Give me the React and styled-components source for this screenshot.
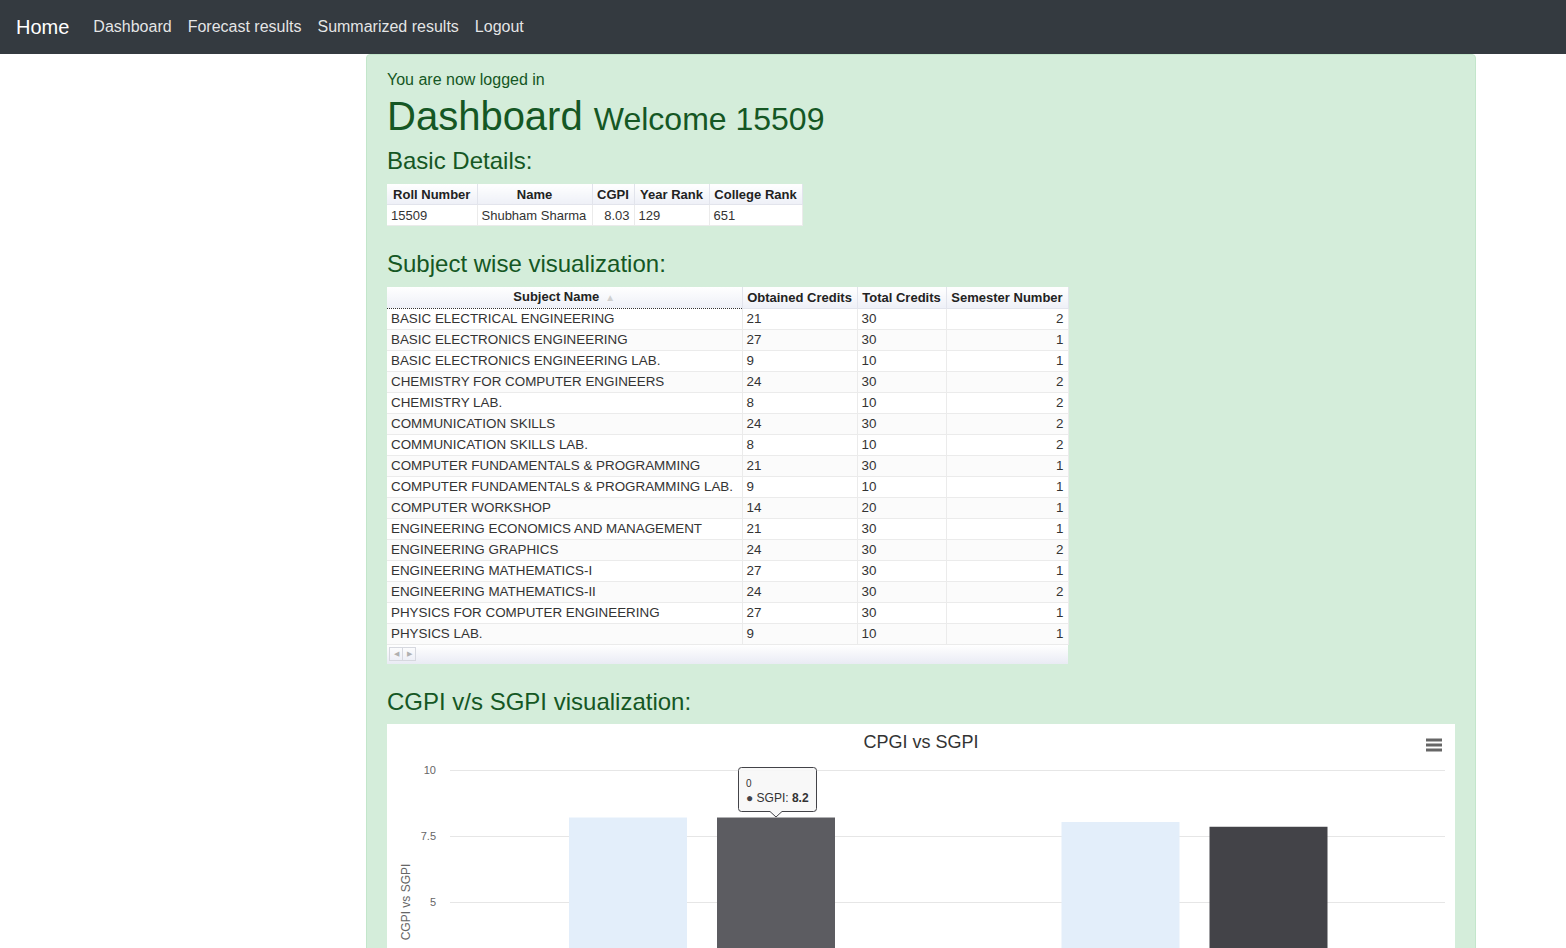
import React from 'react';
import styled, { createGlobalStyle } from 'styled-components';

const GlobalStyle = createGlobalStyle`
  html, body {
    margin: 0;
    padding: 0;
    overflow: hidden;
  }
  body {
    font-family: 'Liberation Sans', Arial, sans-serif;
    font-size: 16px;
    line-height: 1.5;
    color: #212529;
    background: #fff;
  }
  * {
    box-sizing: border-box;
  }
`;

const Navbar = styled.nav`
  height: 54px;
  background: #343a40;
  display: flex;
  align-items: center;
  padding: 0 16px;
`;

const Brand = styled.a`
  color: #fff;
  font-size: 20px;
  margin-right: 16px;
  text-decoration: none;
`;

const NavLinks = styled.div`
  display: flex;
`;

const NavLink = styled.a`
  color: rgba(255, 255, 255, 0.88);
  font-size: 16px;
  padding: 0 8px;
  text-decoration: none;
`;

const Main = styled.main`
  padding: 0 90px 0 366px;
`;

const Alert = styled.div`
  background: #d4edda;
  border: 1px solid #c3e6cb;
  border-radius: 4px;
  color: #155724;
  padding: 13px 20px 40px;
`;

const Note = styled.div`
  font-size: 16px;
  line-height: 24px;
`;

const PageTitle = styled.h1`
  font-size: 40px;
  font-weight: 400;
  line-height: 1.2;
  margin: 0 0 7px;
`;

const TitleSmall = styled.span`
  font-size: 32px;
`;

const SectionTitle = styled.h3`
  font-size: 24px;
  font-weight: 400;
  line-height: 1.2;
  margin: 0 0 8px;
`;

const TableBlock = styled.div`
  margin-bottom: 24px;
`;

const DataTable = styled.table`
  border-collapse: collapse;
  table-layout: fixed;
  width: ${(p) => p.$width}px;
  background: #fff;
  font-size: 13px;
  line-height: 15px;
  color: #333;
`;

const HeadCell = styled.th`
  height: 21px;
  padding: 0 4px;
  font-size: 13px;
  font-weight: 700;
  text-align: ${(p) => p.$align || 'center'};
  white-space: nowrap;
  color: #222;
  background: linear-gradient(#ffffff, #eef0f7);
  border-right: 1px solid #e2e4ec;
  border-bottom: 1px ${(p) => (p.$sorted ? 'dotted #333' : 'solid #e2e4ec')};
`;

const SortArrow = styled.span`
  color: #d0d0d0;
  font-size: 10px;
  margin-left: 6px;
`;

const Row = styled.tr`
  background: ${(p) => (p.$odd ? '#fbfbfb' : '#fff')};
`;

const Cell = styled.td`
  height: 21px;
  padding: 0 4px;
  font-size: ${(p) => p.$size || 13}px;
  text-align: ${(p) => p.$align || 'left'};
  white-space: nowrap;
  overflow: hidden;
  border-right: 1px solid #ebebeb;
  border-bottom: 1px solid #ebebeb;
`;

const TableFooter = styled.div`
  width: ${(p) => p.$width}px;
  height: 19px;
  padding: 2px 2px;
  display: flex;
  background: linear-gradient(#ffffff, #e9ebf4);
`;

const ScrollButton = styled.span`
  width: 14px;
  height: 14px;
  border: 1px solid #d6d8df;
  margin-right: -1px;
  display: flex;
  align-items: center;
  justify-content: center;
  color: #b0b0b0;
  font-size: 7px;
  line-height: 1;
`;

const ChartBox = styled.div`
  background: #fff;
  height: 400px;
`;

const basics = [['15509', 'Shubham Sharma', '8.03', '129', '651']];

const subjects = [
  ['BASIC ELECTRICAL ENGINEERING', 21, 30, 2],
  ['BASIC ELECTRONICS ENGINEERING', 27, 30, 1],
  ['BASIC ELECTRONICS ENGINEERING LAB.', 9, 10, 1],
  ['CHEMISTRY FOR COMPUTER ENGINEERS', 24, 30, 2],
  ['CHEMISTRY LAB.', 8, 10, 2],
  ['COMMUNICATION SKILLS', 24, 30, 2],
  ['COMMUNICATION SKILLS LAB.', 8, 10, 2],
  ['COMPUTER FUNDAMENTALS & PROGRAMMING', 21, 30, 1],
  ['COMPUTER FUNDAMENTALS & PROGRAMMING LAB.', 9, 10, 1],
  ['COMPUTER WORKSHOP', 14, 20, 1],
  ['ENGINEERING ECONOMICS AND MANAGEMENT', 21, 30, 1],
  ['ENGINEERING GRAPHICS', 24, 30, 2],
  ['ENGINEERING MATHEMATICS-I', 27, 30, 1],
  ['ENGINEERING MATHEMATICS-II', 24, 30, 2],
  ['PHYSICS FOR COMPUTER ENGINEERING', 27, 30, 1],
  ['PHYSICS LAB.', 9, 10, 1],
];

// valeurs du graphique : [cgpi, sgpi] par semestre
const chartData = [
  { cgpi: 8.2, sgpi: 8.2 },
  { cgpi: 8.03, sgpi: 7.85 },
];

const PLOT_TOP = 46;
const PLOT_BOTTOM = 310;
const PLOT_LEFT = 63;
const PLOT_RIGHT = 1058;
const yFor = (v) => PLOT_BOTTOM - (v / 10) * (PLOT_BOTTOM - PLOT_TOP);

const GradeChart = () => {
  const ticks = [0, 2.5, 5, 7.5, 10];
  const groupWidth = (PLOT_RIGHT - PLOT_LEFT) / chartData.length;
  return (
    <svg width="100%" height="400" viewBox="0 0 1068 400" fontFamily="'Liberation Sans', Arial, sans-serif">
      <text x="534" y="24" textAnchor="middle" fontSize="18" fill="#333">CPGI vs SGPI</text>
      <g stroke="#666" strokeWidth="3">
        <line x1="1039" y1="16" x2="1055" y2="16" />
        <line x1="1039" y1="21" x2="1055" y2="21" />
        <line x1="1039" y1="26" x2="1055" y2="26" />
      </g>
      {ticks.map((t) => (
        <g key={t}>
          <line x1={PLOT_LEFT} x2={PLOT_RIGHT} y1={yFor(t) + 0.5} y2={yFor(t) + 0.5} stroke="#e6e6e6" />
          <text x="49" y={yFor(t) + 4} textAnchor="end" fontSize="11" fill="#666">{t}</text>
        </g>
      ))}
      <text x="23" y="178" transform="rotate(-90 23 178)" textAnchor="middle" fontSize="12" fill="#666">CGPI vs SGPI</text>
      {chartData.map((d, i) => {
        const gx = PLOT_LEFT + i * groupWidth;
        const lx = gx + 119 + (i === 1 ? -5 : 0);
        return (
          <g key={i}>
            <rect x={lx} y={yFor(d.cgpi)} width="118" height={PLOT_BOTTOM - yFor(d.cgpi)} fill="#e3eefa" />
            <rect x={lx + 148} y={yFor(d.sgpi)} width="118" height={PLOT_BOTTOM - yFor(d.sgpi)} fill={i === 0 ? '#5c5c61' : '#434348'} />
          </g>
        );
      })}
      <path d="M354.5 43.5 H426.5 Q429.5 43.5 429.5 46.5 V84.5 Q429.5 87.5 426.5 87.5 H395 L389 93 L383 87.5 H354.5 Q351.5 87.5 351.5 84.5 V46.5 Q351.5 43.5 354.5 43.5 Z" fill="rgba(247,247,247,0.92)" stroke="#434348" />
      <text x="359" y="63" fontSize="10" fill="#333">0</text>
      <text x="359" y="78" fontSize="12" fill="#333">
        <tspan fill="#434348">●</tspan> SGPI: <tspan fontWeight="700">8.2</tspan>
      </text>
    </svg>
  );
};

const App = () => (
  <>
    <GlobalStyle />
    <Navbar>
      <Brand href="#">Home</Brand>
      <NavLinks>
        <NavLink href="#">Dashboard</NavLink>
        <NavLink href="#">Forecast results</NavLink>
        <NavLink href="#">Summarized results</NavLink>
        <NavLink href="#">Logout</NavLink>
      </NavLinks>
    </Navbar>
    <Main>
      <Alert>
        <Note>You are now logged in</Note>
        <PageTitle>
          Dashboard <TitleSmall>Welcome 15509</TitleSmall>
        </PageTitle>

        <SectionTitle>Basic Details:</SectionTitle>
        <TableBlock>
          <DataTable $width={415}>
            <colgroup>
              <col style={{ width: 90 }} />
              <col style={{ width: 115 }} />
              <col style={{ width: 42 }} />
              <col style={{ width: 75 }} />
              <col style={{ width: 93 }} />
            </colgroup>
            <thead>
              <tr>
                <HeadCell>Roll Number</HeadCell>
                <HeadCell>Name</HeadCell>
                <HeadCell>CGPI</HeadCell>
                <HeadCell>Year Rank</HeadCell>
                <HeadCell>College Rank</HeadCell>
              </tr>
            </thead>
            <tbody>
              {basics.map((r) => (
                <Row key={r[0]}>
                  <Cell>{r[0]}</Cell>
                  <Cell>{r[1]}</Cell>
                  <Cell $align="right">{r[2]}</Cell>
                  <Cell>{r[3]}</Cell>
                  <Cell>{r[4]}</Cell>
                </Row>
              ))}
            </tbody>
          </DataTable>
        </TableBlock>

        <SectionTitle>Subject wise visualization:</SectionTitle>
        <TableBlock>
          <DataTable $width={681}>
            <colgroup>
              <col style={{ width: 355 }} />
              <col style={{ width: 115 }} />
              <col style={{ width: 89 }} />
              <col style={{ width: 122 }} />
            </colgroup>
            <thead>
              <tr>
                <HeadCell $sorted>
                  Subject Name<SortArrow>▲</SortArrow>
                </HeadCell>
                <HeadCell>Obtained Credits</HeadCell>
                <HeadCell>Total Credits</HeadCell>
                <HeadCell>Semester Number</HeadCell>
              </tr>
            </thead>
            <tbody>
              {subjects.map((s, i) => (
                <Row key={s[0]} $odd={i % 2 === 1}>
                  <Cell $size={13.4}>{s[0]}</Cell>
                  <Cell $size={13.4}>{s[1]}</Cell>
                  <Cell $size={13.4}>{s[2]}</Cell>
                  <Cell $size={13.4} $align="right">{s[3]}</Cell>
                </Row>
              ))}
            </tbody>
          </DataTable>
          <TableFooter $width={681}>
            <ScrollButton>◀</ScrollButton>
            <ScrollButton>▶</ScrollButton>
          </TableFooter>
        </TableBlock>

        <SectionTitle>CGPI v/s SGPI visualization:</SectionTitle>
        <ChartBox>
          <GradeChart />
        </ChartBox>
      </Alert>
    </Main>
  </>
);

export default App;
